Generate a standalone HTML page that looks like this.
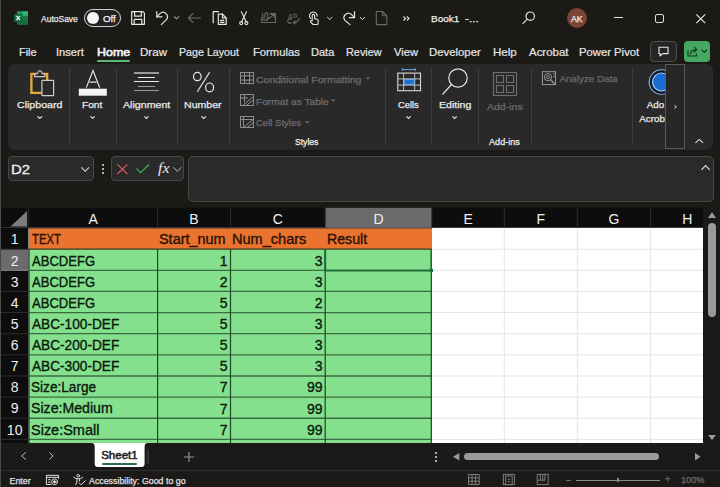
<!DOCTYPE html>
<html><head><meta charset="utf-8">
<style>
*{margin:0;padding:0;box-sizing:border-box}
html,body{width:720px;height:487px;overflow:hidden;background:#1b1a17;font-family:"Liberation Sans",sans-serif;color:#e8e8e8}
.a{position:absolute}
.t{position:absolute;white-space:nowrap;line-height:1}
.g{-webkit-text-stroke:0.35px currentColor}
svg{position:absolute;overflow:visible}
</style></head><body>
<div class="a" style="left:0.00px;top:0.00px;width:1.20px;height:487.00px;background:#4a4a4a;z-index:50"></div>
<svg style="left:0;top:0" width="40" height="40" viewBox="0 0 40 40"><rect x="17" y="11.3" width="11" height="13.3" rx="1" fill="#1d9a58"/><rect x="17" y="15.8" width="11" height="4.4" fill="#127a44"/><rect x="17" y="20.2" width="11" height="4.4" rx="1" fill="#176a3c"/><rect x="22.5" y="11.3" width="5.5" height="4.5" fill="#2fb273"/><rect x="14.1" y="13.9" width="8.2" height="8.2" rx="0.8" fill="#0f6b3a"/><path d="M16.4 15.8 L20 20.2 M20 15.8 L16.4 20.2" stroke="#f4f4f4" stroke-width="1.2"/></svg>
<div class="a" style="left:83.50px;top:9.40px;width:37.10px;height:17.25px;border:1.4px solid #d0d0d0;border-radius:9px;background:#232323"></div>
<div class="a" style="left:86.50px;top:11.80px;width:12.70px;height:12.70px;border-radius:50%;background:#f4f4f4"></div>
<svg style="left:0;top:0" width="720" height="40" viewBox="0 0 720 40" fill="none" stroke-linecap="round" stroke-linejoin="round">
<g stroke="#e6e6e6" stroke-width="1.2">
  <path d="M131.7 11.6 H142.8 L144.4 13.2 V24.3 H131.7 Z"/>
  <path d="M134.6 11.6 V16.2 H141.3 V11.6"/>
  <path d="M134.2 24.3 V19.4 H141.8 V24.3"/>
  <path d="M156.8 11.6 V16.8 H162"/>
  <path d="M156.8 16.8 L160 13.6 A4.4 4.4 0 0 1 166.4 19.6 L161.3 24.6"/>
  <path d="M213.2 22.7 V11.7 H218.4"/>
  <path d="M218.3 24.4 V14.2 H222.5 L226.2 17.9 V24.4 Z"/>
  <path d="M222.5 14.2 V17.9 H226.2"/>
  <path d="M220.3 20.3 H223.9 M220.3 22.3 H223.9"/>
  <path d="M241.3 11.7 L246.2 21.8 M246.5 11.7 L241.6 21.8" stroke-width="1.1"/>
  <circle cx="241.2" cy="23.1" r="1.5" stroke-width="1.1"/><circle cx="246.4" cy="23.1" r="1.5" stroke-width="1.1"/>
  <path d="M312.2 20.6 V15.6 A1.2 1.2 0 0 1 314.6 15.6 V18.6 L317 19.2 A1.3 1.3 0 0 1 318.2 20.5 V23.2 A1.3 1.3 0 0 1 316.9 24.5 H313.2 L310.7 22.1 A0.9 0.9 0 0 1 311.3 20.6 L312.2 20.9" stroke-width="1.1"/>
  <path d="M310.5 18.4 A3.8 3.8 0 1 1 317.1 16.3" stroke-width="1.1"/>
  <path d="M354.5 11.6 V17.6 H349.3"/>
  <path d="M354.5 17.6 L351.4 14.4 A4.4 4.4 0 0 0 345 20.4 L350 24.6"/>
</g>
<g stroke="#dcdcdc" stroke-width="1">
  <path d="M174.3 16.7 L176.5 18.9 L178.7 16.7"/>
  <path d="M327.4 17.3 L329.7 19.5 L332 17.3"/>
  <path d="M360.2 17.3 L362.5 19.5 L364.8 17.3"/>
</g>
<g stroke="#6a6a6a" stroke-width="1.1">
  <path d="M200.5 18 H188.5 M193 13.5 L188.5 18 L193 22.5"/>
  <path d="M261.7 17.5 V22.5 H275.5 V13.6 H270"/>
  <path d="M266 20.5 L274 14.5 M270.8 14.2 H274.2 V17.5"/>
  <path d="M264.9 18 V14.3 A1.4 1.4 0 0 1 267.7 14.3 V17.8 A2.5 2.5 0 0 1 262.7 17.8 V13.5"/>
  <path d="M376.3 11.5 H382.6 L386.8 15.7 V24.6 H376.3 Z M382.6 11.5 V15.7 H386.8"/>
  <path d="M291.5 19.2 A2.3 2.3 0 1 0 291.5 22.8"/>
  <path d="M299.5 18.5 L296.5 22.5 H293.5 M295.2 21 L293.5 22.5 L295.2 24"/>
</g>
</svg>
<div class="t" style="left:288.2px;top:11.6px;font-size:7.5px;color:#6a6a6a;letter-spacing:0.8px">ab</div>
<svg style="left:402.5px;top:16px" width="7" height="5" viewBox="0 0 7 5" fill="none" stroke="#e6e6e6" stroke-width="1.1"><path d="M0.5 0.5 L2.5 2.5 L0.5 4.5 M4 0.5 L6 2.5 L4 4.5"/></svg>
<svg style="left:522px;top:11px" width="14" height="14" viewBox="0 0 14 14" fill="none" stroke="#e0e0e0" stroke-width="1.2"><circle cx="8.2" cy="5.2" r="4.2"/><path d="M5.2 8.2 L0.6 12.8"/></svg>
<div class="a" style="left:566.80px;top:7.80px;width:20.20px;height:20.20px;border-radius:50%;background:#7b4436"></div>
<div class="a" style="left:613.50px;top:17.00px;width:9.50px;height:1.20px;background:#e0e0e0"></div>
<div class="a" style="left:654.50px;top:13.80px;width:9.30px;height:9.30px;border:1.3px solid #e0e0e0;border-radius:2px"></div>
<svg style="left:695.5px;top:13.8px" width="9.5" height="9.5" viewBox="0 0 10 10" fill="none" stroke="#e8e8e8" stroke-width="1.2"><path d="M0.3 0.3 L9.7 9.7 M9.7 0.3 L0.3 9.7"/></svg>
<div class="a" style="left:97.00px;top:60.00px;width:33.00px;height:2.00px;background:#5cb878;border-radius:1px"></div>
<div class="a" style="left:650.30px;top:41.00px;width:26.60px;height:21.00px;border:1px solid #4e4e4e;border-radius:4px;background:#252525"></div>
<svg style="left:0;top:0" width="720" height="70" viewBox="0 0 720 70" fill="none" stroke-linejoin="round" stroke-linecap="round"><path d="M659 47.2 H668 V53.6 H662.6 L660 56 V53.6 H659 Z" stroke="#e8e8e8" stroke-width="1.1"/></svg>
<div class="a" style="left:683.90px;top:41.00px;width:26.30px;height:20.50px;border-radius:4px;background:#45a860"></div>
<svg style="left:0;top:0" width="720" height="70" viewBox="0 0 720 70" fill="none" stroke="#123a1c" stroke-width="1.1" stroke-linejoin="round" stroke-linecap="round"><path d="M688 50.5 V56 H696.4 V53.8"/><path d="M690.5 54 C690.8 50.8 692.6 49.6 696.4 49.6 M694.3 47.2 L696.8 49.6 L694.3 52"/><path d="M702 50 L704.3 52.3 L706.6 50"/></svg>
<div class="a" style="left:8.00px;top:64.30px;width:705.30px;height:85.70px;border-radius:7px;background:#292929"></div>
<div class="a" style="left:69.00px;top:68.00px;width:1.00px;height:76.00px;background:#3e3e3e"></div>
<div class="a" style="left:116.20px;top:68.00px;width:1.00px;height:76.00px;background:#3e3e3e"></div>
<div class="a" style="left:177.00px;top:68.00px;width:1.00px;height:76.00px;background:#3e3e3e"></div>
<div class="a" style="left:229.20px;top:68.00px;width:1.00px;height:76.00px;background:#3e3e3e"></div>
<div class="a" style="left:385.00px;top:68.00px;width:1.00px;height:76.00px;background:#3e3e3e"></div>
<div class="a" style="left:431.00px;top:68.00px;width:1.00px;height:76.00px;background:#3e3e3e"></div>
<div class="a" style="left:478.20px;top:68.00px;width:1.00px;height:76.00px;background:#3e3e3e"></div>
<div class="a" style="left:531.20px;top:68.00px;width:1.00px;height:76.00px;background:#3e3e3e"></div>
<div class="a" style="left:631.50px;top:68.00px;width:1.00px;height:76.00px;background:#3e3e3e"></div>
<svg style="left:0;top:0" width="720" height="150" viewBox="0 0 720 150" fill="none"><path d="M41.4 92.8 H31.4 V73.8 H47.2 V80" stroke="#e9a83c" stroke-width="2.3"/><path d="M34.6 76.6 H45 V74.6 Q43.4 73.9 42.1 73.4 Q41.2 70.6 39.8 70.6 Q38.4 70.6 37.5 73.4 Q36.2 73.9 34.6 74.6 Z" stroke="#cdcdcd" stroke-width="1.1" fill="#292929"/><rect x="41.9" y="80.4" width="11.7" height="15.2" rx="0.6" stroke="#cdcdcd" stroke-width="1.2" fill="#292929"/></svg>
<svg style="left:36.90px;top:116.00px" width="5.60" height="2.60" viewBox="0 0 5.60 2.60" fill="none" stroke="#e0e0e0" stroke-width="1.2"><path d="M0.4 0.4 L2.80 2.20 L5.20 0.4"/></svg>
<svg style="left:0;top:0" width="720" height="150" viewBox="0 0 720 150" fill="none"><path d="M86.3 87.6 L93 70.6 L99.7 87.6 M89.6 82.1 H96.4" stroke="#e8e8e8" stroke-width="1.2"/><rect x="78.8" y="88.7" width="28" height="7" fill="#f4f4f4"/></svg>
<svg style="left:90.10px;top:116.00px" width="5.20" height="2.60" viewBox="0 0 5.20 2.60" fill="none" stroke="#e0e0e0" stroke-width="1.2"><path d="M0.4 0.4 L2.60 2.20 L4.80 0.4"/></svg>
<div class="a" style="left:134.30px;top:72.30px;width:24.30px;height:1.30px;background:#9a9a9a"></div>
<div class="a" style="left:138.00px;top:77.00px;width:17.20px;height:1.30px;background:#e8e8e8"></div>
<div class="a" style="left:134.30px;top:81.00px;width:24.30px;height:1.30px;background:#e8e8e8"></div>
<div class="a" style="left:138.00px;top:85.50px;width:17.20px;height:1.30px;background:#9a9a9a"></div>
<div class="a" style="left:134.30px;top:89.60px;width:24.30px;height:1.30px;background:#9a9a9a"></div>
<svg style="left:143.70px;top:116.00px" width="4.90" height="2.90" viewBox="0 0 4.90 2.90" fill="none" stroke="#e0e0e0" stroke-width="1.2"><path d="M0.4 0.4 L2.45 2.50 L4.50 0.4"/></svg>
<svg style="left:0;top:0" width="720" height="100" viewBox="0 0 720 100" fill="none" stroke="#e8e8e8" stroke-width="1.2"><ellipse cx="197.35" cy="76.55" rx="3.85" ry="4.15"/><ellipse cx="209.6" cy="87.4" rx="4" ry="4.4"/><path d="M209.6 72.3 L197.3 91.7"/></svg>
<svg style="left:200.50px;top:116.00px" width="5.40" height="2.90" viewBox="0 0 5.40 2.90" fill="none" stroke="#e0e0e0" stroke-width="1.2"><path d="M0.4 0.4 L2.70 2.50 L5.00 0.4"/></svg>
<svg style="left:240px;top:72px" width="14" height="12" viewBox="0 0 14 12" fill="none" stroke="#8c8c8c" stroke-width="1"><rect x="0.5" y="0.5" width="13" height="11"/><path d="M0.5 4 H13.5 M0.5 8 H13.5 M4.5 0.5 V11.5 M9.5 0.5 V11.5"/><rect x="4.5" y="4" width="5" height="4" fill="#151515"/></svg>
<svg style="left:365.70px;top:76.80px" width="3.90" height="2.10" viewBox="0 0 3.90 2.10" fill="none" stroke="#6e6e6e" stroke-width="1.2"><path d="M0.4 0.4 L1.95 1.70 L3.50 0.4"/></svg>
<svg style="left:240px;top:94px" width="14" height="12" viewBox="0 0 14 12" fill="none" stroke="#8c8c8c" stroke-width="1"><rect x="0.5" y="0.5" width="13" height="11"/><path d="M0.5 4 H8 M4.5 0.5 V8"/><path d="M3 11 L13 3 M6 11.5 L13.5 6"/></svg>
<svg style="left:331.30px;top:99.00px" width="4.50" height="2.10" viewBox="0 0 4.50 2.10" fill="none" stroke="#6e6e6e" stroke-width="1.2"><path d="M0.4 0.4 L2.25 1.70 L4.10 0.4"/></svg>
<svg style="left:240px;top:116px" width="14" height="12" viewBox="0 0 14 12" fill="none" stroke="#8c8c8c" stroke-width="1"><rect x="0.5" y="0.5" width="13" height="11"/><path d="M0.5 3.5 H13.5 M3.5 0.5 V11.5"/><path d="M4 11 L13 3.5 M7 11.5 L13.5 6.5"/></svg>
<svg style="left:305.40px;top:121.00px" width="4.50" height="2.10" viewBox="0 0 4.50 2.10" fill="none" stroke="#6e6e6e" stroke-width="1.2"><path d="M0.4 0.4 L2.25 1.70 L4.10 0.4"/></svg>
<svg style="left:0;top:0" width="720" height="150" viewBox="0 0 720 150" fill="none"><path d="M402.3 69.6 H415.3 M402.3 68.2 V71 M415.3 68.2 V71" stroke="#6fa8e0" stroke-width="1"/><rect x="397.8" y="73.1" width="22.7" height="17.6" stroke="#dadada" stroke-width="1.1"/><path d="M403.6 73.1 V90.7 M414.7 73.1 V90.7 M397.8 78.9 H420.5 M397.8 85.1 H420.5" stroke="#bdbdbd" stroke-width="1"/><rect x="404.1" y="79.4" width="10.1" height="5.2" fill="#1f6fd0" stroke="#7ab4f0" stroke-width="0.9"/></svg>
<svg style="left:406.00px;top:115.80px" width="5.00" height="2.80" viewBox="0 0 5.00 2.80" fill="none" stroke="#e0e0e0" stroke-width="1.2"><path d="M0.4 0.4 L2.50 2.40 L4.60 0.4"/></svg>
<svg style="left:442px;top:68px" width="27" height="27" viewBox="0 0 27 27" fill="none" stroke="#e0e0e0" stroke-width="1.2"><circle cx="16" cy="10" r="9.2"/><path d="M9.5 16.5 L0.5 26.5"/></svg>
<svg style="left:451.90px;top:115.80px" width="5.20" height="2.80" viewBox="0 0 5.20 2.80" fill="none" stroke="#e0e0e0" stroke-width="1.2"><path d="M0.4 0.4 L2.60 2.40 L4.80 0.4"/></svg>
<svg style="left:493px;top:71.5px" width="24" height="24" viewBox="0 0 24 24" fill="none" stroke="#6f6f6f" stroke-width="1.1"><rect x="0.5" y="0.5" width="23" height="23"/><rect x="3.5" y="3.5" width="7" height="7"/><rect x="13.5" y="3.5" width="7" height="7"/><rect x="3.5" y="13.5" width="7" height="7"/><rect x="13.5" y="13.5" width="7" height="7"/></svg>
<svg style="left:0;top:0" width="720" height="150" viewBox="0 0 720 150" fill="none" stroke="#9a9a9a" stroke-width="1"><rect x="542.4" y="71.7" width="13.2" height="12.9"/><circle cx="548" cy="77.2" r="3.6"/><circle cx="548" cy="77.2" r="1.5" stroke-width="0.9"/><path d="M550.6 79.8 L554.6 83.8" stroke-width="1.3"/><path d="M553 74 H555 M553 76.5 H555" stroke-width="0.8"/></svg>
<svg style="left:0;top:0" width="720" height="150" viewBox="0 0 720 150" fill="none"><circle cx="661.5" cy="82" r="12.2" stroke="#86acd6" stroke-width="1.3"/><circle cx="661.5" cy="82" r="10.7" stroke="#06152a" stroke-width="1.8"/><circle cx="661.5" cy="82" r="9.0" fill="#1b6dd1" stroke="#a2c6ee" stroke-width="1.2"/></svg>
<div class="a" style="left:665.20px;top:64.00px;width:20.30px;height:84.60px;border:1px solid #5a5a5a;background:#272727"></div>
<svg style="left:674.3px;top:104.8px" width="2.8" height="3.6" viewBox="0 0 2.8 3.6" fill="none" stroke="#e0e0e0" stroke-width="0.9"><path d="M0.3 0.3 L2.5 1.8 L0.3 3.3"/></svg>
<svg style="left:695px;top:138.8px" width="8.6" height="4.2" viewBox="0 0 8.6 4.2" fill="none" stroke="#e0e0e0" stroke-width="1.1"><path d="M0.4 3.8 L4.3 0.4 L8.2 3.8"/></svg>
<div class="a" style="left:7.50px;top:156.30px;width:86.20px;height:24.70px;border:1px solid #474747;border-radius:4px;background:#2a2a2a"></div>
<svg style="left:80.8px;top:167px" width="8.4" height="4.7" viewBox="0 0 8.4 4.7" fill="none" stroke="#d8d8d8" stroke-width="1.1"><path d="M0.4 0.4 L4.2 4.3 L8 0.4"/></svg>
<div class="a" style="left:101.50px;top:164.40px;width:2.10px;height:2.10px;background:#e6e6e6;border-radius:1px"></div>
<div class="a" style="left:101.50px;top:168.00px;width:2.10px;height:2.10px;background:#e6e6e6;border-radius:1px"></div>
<div class="a" style="left:101.50px;top:171.60px;width:2.10px;height:2.10px;background:#e6e6e6;border-radius:1px"></div>
<div class="a" style="left:111.30px;top:156.30px;width:72.40px;height:24.50px;border:1px solid #474747;border-radius:4px;background:#2a2a2a"></div>
<svg style="left:116.7px;top:163.8px" width="10.8" height="10.4" viewBox="0 0 10.8 10.4" fill="none" stroke="#e0575c" stroke-width="1.2"><path d="M0.4 0.4 L10.4 10 M10.4 0.4 L0.4 10"/></svg>
<svg style="left:135.8px;top:163.8px" width="13.4" height="9.2" viewBox="0 0 13.4 9.2" fill="none" stroke="#3fae5c" stroke-width="1.3"><path d="M0.5 4.6 L4.6 8.7 L13 0.5"/></svg>
<svg style="left:173.3px;top:166.5px" width="8.7" height="4.8" viewBox="0 0 8.7 4.8" fill="none" stroke="#bdbdbd" stroke-width="1"><path d="M0.4 0.4 L4.35 4.4 L8.3 0.4"/></svg>
<div class="a" style="left:187.50px;top:156.30px;width:526.30px;height:45.90px;border:1px solid #474747;border-radius:5px;background:#2a2a2a"></div>
<svg style="left:700.8px;top:164.7px" width="9.2" height="5.3" viewBox="0 0 9.2 5.3" fill="none" stroke="#e0e0e0" stroke-width="1.1"><path d="M0.4 4.9 L4.6 0.5 L8.8 4.9"/></svg>
<div class="a" style="left:1.00px;top:208.00px;width:702.00px;height:235.00px;background:#ffffff"></div>
<div class="a" style="left:28.50px;top:228.20px;width:403.30px;height:21.00px;background:#e9732f"></div>
<div class="a" style="left:28.50px;top:249.20px;width:403.30px;height:193.80px;background:#84e08c"></div>
<svg style="left:0;top:0" width="720" height="487" viewBox="0 0 720 487" shape-rendering="geometricPrecision">
<line x1="431.8" y1="249.20" x2="703" y2="249.20" stroke="#e4e4e4" stroke-width="1"/>
<line x1="431.8" y1="270.33" x2="703" y2="270.33" stroke="#e4e4e4" stroke-width="1"/>
<line x1="431.8" y1="291.46" x2="703" y2="291.46" stroke="#e4e4e4" stroke-width="1"/>
<line x1="431.8" y1="312.59" x2="703" y2="312.59" stroke="#e4e4e4" stroke-width="1"/>
<line x1="431.8" y1="333.72" x2="703" y2="333.72" stroke="#e4e4e4" stroke-width="1"/>
<line x1="431.8" y1="354.85" x2="703" y2="354.85" stroke="#e4e4e4" stroke-width="1"/>
<line x1="431.8" y1="375.98" x2="703" y2="375.98" stroke="#e4e4e4" stroke-width="1"/>
<line x1="431.8" y1="397.11" x2="703" y2="397.11" stroke="#e4e4e4" stroke-width="1"/>
<line x1="431.8" y1="418.24" x2="703" y2="418.24" stroke="#e4e4e4" stroke-width="1"/>
<line x1="431.8" y1="439.37" x2="703" y2="439.37" stroke="#e4e4e4" stroke-width="1"/>
<line x1="504.30" y1="228" x2="504.30" y2="443" stroke="#e4e4e4" stroke-width="1"/>
<line x1="577.30" y1="228" x2="577.30" y2="443" stroke="#e4e4e4" stroke-width="1"/>
<line x1="650.70" y1="228" x2="650.70" y2="443" stroke="#e4e4e4" stroke-width="1"/>
<line x1="28.5" y1="270.33" x2="431.8" y2="270.33" stroke="#3b6b42" stroke-width="1.3"/>
<line x1="28.5" y1="291.46" x2="431.8" y2="291.46" stroke="#3b6b42" stroke-width="1.3"/>
<line x1="28.5" y1="312.59" x2="431.8" y2="312.59" stroke="#3b6b42" stroke-width="1.3"/>
<line x1="28.5" y1="333.72" x2="431.8" y2="333.72" stroke="#3b6b42" stroke-width="1.3"/>
<line x1="28.5" y1="354.85" x2="431.8" y2="354.85" stroke="#3b6b42" stroke-width="1.3"/>
<line x1="28.5" y1="375.98" x2="431.8" y2="375.98" stroke="#3b6b42" stroke-width="1.3"/>
<line x1="28.5" y1="397.11" x2="431.8" y2="397.11" stroke="#3b6b42" stroke-width="1.3"/>
<line x1="28.5" y1="418.24" x2="431.8" y2="418.24" stroke="#3b6b42" stroke-width="1.3"/>
<line x1="28.5" y1="439.37" x2="431.8" y2="439.37" stroke="#3b6b42" stroke-width="1.3"/>
<line x1="28.5" y1="249.20" x2="431.8" y2="249.20" stroke="#3a3a22" stroke-width="1.3"/>
<line x1="28.5" y1="228.3" x2="431.8" y2="228.3" stroke="#7a4a26" stroke-width="0.9"/>
<line x1="29.00" y1="249.20" x2="29.00" y2="443" stroke="#1d4a24" stroke-width="1.2"/>
<line x1="157.60" y1="249.20" x2="157.60" y2="443" stroke="#1d4a24" stroke-width="1.2"/>
<line x1="230.50" y1="249.20" x2="230.50" y2="443" stroke="#1d4a24" stroke-width="1.2"/>
<line x1="325.20" y1="249.20" x2="325.20" y2="443" stroke="#1d4a24" stroke-width="1.2"/>
<line x1="431.30" y1="249.20" x2="431.30" y2="443" stroke="#1d4a24" stroke-width="1.2"/>
<line x1="325.2" y1="249.20" x2="325.2" y2="271.13" stroke="#1e6a38" stroke-width="2"/>
<line x1="325.2" y1="270.63" x2="431.8" y2="270.63" stroke="#1e6a38" stroke-width="1.8"/>
<line x1="431.3" y1="249.20" x2="431.3" y2="270.33" stroke="#1e6a38" stroke-width="1.4"/>
<rect x="429.8" y="268.83" width="3.2" height="3.2" fill="#1e6a38"/>
<rect x="1" y="207.8" width="702" height="20" fill="#0d0d0d"/>
<rect x="325.2" y="207.8" width="106.6" height="20" fill="#6b6b6b"/>
<line x1="157.60" y1="208" x2="157.60" y2="227.8" stroke="#2e2e2e" stroke-width="1"/>
<line x1="230.50" y1="208" x2="230.50" y2="227.8" stroke="#2e2e2e" stroke-width="1"/>
<line x1="325.20" y1="208" x2="325.20" y2="227.8" stroke="#2e2e2e" stroke-width="1"/>
<line x1="431.80" y1="208" x2="431.80" y2="227.8" stroke="#2e2e2e" stroke-width="1"/>
<line x1="504.30" y1="208" x2="504.30" y2="227.8" stroke="#2e2e2e" stroke-width="1"/>
<line x1="577.30" y1="208" x2="577.30" y2="227.8" stroke="#2e2e2e" stroke-width="1"/>
<line x1="650.70" y1="208" x2="650.70" y2="227.8" stroke="#2e2e2e" stroke-width="1"/>
<rect x="1" y="227.8" width="27.5" height="215.2" fill="#0d0d0d"/>
<rect x="1" y="249.20" width="27.5" height="21.13" fill="#6b6b6b"/>
<line x1="1" y1="249.20" x2="28.3" y2="249.20" stroke="#2e2e2e" stroke-width="1"/>
<line x1="1" y1="270.33" x2="28.3" y2="270.33" stroke="#8a8a8a" stroke-width="1"/>
<line x1="1" y1="291.46" x2="28.3" y2="291.46" stroke="#2e2e2e" stroke-width="1"/>
<line x1="1" y1="312.59" x2="28.3" y2="312.59" stroke="#2e2e2e" stroke-width="1"/>
<line x1="1" y1="333.72" x2="28.3" y2="333.72" stroke="#2e2e2e" stroke-width="1"/>
<line x1="1" y1="354.85" x2="28.3" y2="354.85" stroke="#2e2e2e" stroke-width="1"/>
<line x1="1" y1="375.98" x2="28.3" y2="375.98" stroke="#2e2e2e" stroke-width="1"/>
<line x1="1" y1="397.11" x2="28.3" y2="397.11" stroke="#2e2e2e" stroke-width="1"/>
<line x1="1" y1="418.24" x2="28.3" y2="418.24" stroke="#2e2e2e" stroke-width="1"/>
<line x1="1" y1="439.37" x2="28.3" y2="439.37" stroke="#2e2e2e" stroke-width="1"/>
<line x1="28.3" y1="208" x2="28.3" y2="227.8" stroke="#2e2e2e" stroke-width="1"/>
<path d="M27 211 V226.5 H10.5 Z" fill="#7c7c7c"/>
</svg>
<div class="t" style="left:28.50px;top:211.95px;width:129.10px;text-align:center;font-size:14px;color:#f0f0f0">A</div>
<div class="t" style="left:157.60px;top:211.95px;width:72.90px;text-align:center;font-size:14px;color:#f0f0f0">B</div>
<div class="t" style="left:230.50px;top:211.95px;width:94.70px;text-align:center;font-size:14px;color:#f0f0f0">C</div>
<div class="t" style="left:325.20px;top:211.95px;width:106.60px;text-align:center;font-size:14px;color:#f0f0f0">D</div>
<div class="t" style="left:431.80px;top:211.95px;width:72.50px;text-align:center;font-size:14px;color:#f0f0f0">E</div>
<div class="t" style="left:504.30px;top:211.95px;width:73.00px;text-align:center;font-size:14px;color:#f0f0f0">F</div>
<div class="t" style="left:577.30px;top:211.95px;width:73.40px;text-align:center;font-size:14px;color:#f0f0f0">G</div>
<div class="t" style="left:650.70px;top:211.95px;width:73.00px;text-align:center;font-size:14px;color:#f0f0f0">H</div>
<div class="t" style="left:1px;top:232.45px;width:27.3px;text-align:center;font-size:14px;color:#f0f0f0">1</div>
<div class="t" style="left:1px;top:253.58px;width:27.3px;text-align:center;font-size:14px;color:#f0f0f0">2</div>
<div class="t" style="left:1px;top:274.71px;width:27.3px;text-align:center;font-size:14px;color:#f0f0f0">3</div>
<div class="t" style="left:1px;top:295.84px;width:27.3px;text-align:center;font-size:14px;color:#f0f0f0">4</div>
<div class="t" style="left:1px;top:316.97px;width:27.3px;text-align:center;font-size:14px;color:#f0f0f0">5</div>
<div class="t" style="left:1px;top:338.10px;width:27.3px;text-align:center;font-size:14px;color:#f0f0f0">6</div>
<div class="t" style="left:1px;top:359.23px;width:27.3px;text-align:center;font-size:14px;color:#f0f0f0">7</div>
<div class="t" style="left:1px;top:380.36px;width:27.3px;text-align:center;font-size:14px;color:#f0f0f0">8</div>
<div class="t" style="left:1px;top:401.49px;width:27.3px;text-align:center;font-size:14px;color:#f0f0f0">9</div>
<div class="t" style="left:1px;top:422.62px;width:27.3px;text-align:center;font-size:14px;color:#f0f0f0">10</div>
<div class="t" style="left:157.5px;top:253.68px;width:70px;text-align:right;font-size:14px;color:#0b1a0d;-webkit-text-stroke:0.35px #0b1a0d">1</div>
<div class="t" style="left:230.5px;top:253.68px;width:92px;text-align:right;font-size:14px;color:#0b1a0d;-webkit-text-stroke:0.35px #0b1a0d">3</div>
<div class="t" style="left:157.5px;top:274.81px;width:70px;text-align:right;font-size:14px;color:#0b1a0d;-webkit-text-stroke:0.35px #0b1a0d">2</div>
<div class="t" style="left:230.5px;top:274.81px;width:92px;text-align:right;font-size:14px;color:#0b1a0d;-webkit-text-stroke:0.35px #0b1a0d">3</div>
<div class="t" style="left:157.5px;top:295.94px;width:70px;text-align:right;font-size:14px;color:#0b1a0d;-webkit-text-stroke:0.35px #0b1a0d">5</div>
<div class="t" style="left:230.5px;top:295.94px;width:92px;text-align:right;font-size:14px;color:#0b1a0d;-webkit-text-stroke:0.35px #0b1a0d">2</div>
<div class="t" style="left:157.5px;top:317.07px;width:70px;text-align:right;font-size:14px;color:#0b1a0d;-webkit-text-stroke:0.35px #0b1a0d">5</div>
<div class="t" style="left:230.5px;top:317.07px;width:92px;text-align:right;font-size:14px;color:#0b1a0d;-webkit-text-stroke:0.35px #0b1a0d">3</div>
<div class="t" style="left:157.5px;top:338.20px;width:70px;text-align:right;font-size:14px;color:#0b1a0d;-webkit-text-stroke:0.35px #0b1a0d">5</div>
<div class="t" style="left:230.5px;top:338.20px;width:92px;text-align:right;font-size:14px;color:#0b1a0d;-webkit-text-stroke:0.35px #0b1a0d">3</div>
<div class="t" style="left:157.5px;top:359.33px;width:70px;text-align:right;font-size:14px;color:#0b1a0d;-webkit-text-stroke:0.35px #0b1a0d">5</div>
<div class="t" style="left:230.5px;top:359.33px;width:92px;text-align:right;font-size:14px;color:#0b1a0d;-webkit-text-stroke:0.35px #0b1a0d">3</div>
<div class="t" style="left:157.5px;top:380.46px;width:70px;text-align:right;font-size:14px;color:#0b1a0d;-webkit-text-stroke:0.35px #0b1a0d">7</div>
<div class="t" style="left:230.5px;top:380.46px;width:92px;text-align:right;font-size:14px;color:#0b1a0d;-webkit-text-stroke:0.35px #0b1a0d">99</div>
<div class="t" style="left:157.5px;top:401.59px;width:70px;text-align:right;font-size:14px;color:#0b1a0d;-webkit-text-stroke:0.35px #0b1a0d">7</div>
<div class="t" style="left:230.5px;top:401.59px;width:92px;text-align:right;font-size:14px;color:#0b1a0d;-webkit-text-stroke:0.35px #0b1a0d">99</div>
<div class="t" style="left:157.5px;top:422.72px;width:70px;text-align:right;font-size:14px;color:#0b1a0d;-webkit-text-stroke:0.35px #0b1a0d">7</div>
<div class="t" style="left:230.5px;top:422.72px;width:92px;text-align:right;font-size:14px;color:#0b1a0d;-webkit-text-stroke:0.35px #0b1a0d">99</div>
<div class="a" style="left:703px;top:208px;width:17px;height:235px;background:#1a1a1a"></div>
<svg style="left:708px;top:212px" width="8" height="6" viewBox="0 0 8 6"><path d="M0 6 L4 0 L8 6 Z" fill="#9a9a9a"/></svg>
<div class="a" style="left:708px;top:222.7px;width:7.5px;height:94.6px;border-radius:4px;background:#9a9a9a"></div>
<svg style="left:708px;top:434.7px" width="8" height="5" viewBox="0 0 8 5"><path d="M0 0 L4 5 L8 0 Z" fill="#9a9a9a"/></svg>
<div class="a" style="left:1.00px;top:443.00px;width:719.00px;height:26.80px;background:#1b1a18"></div>
<svg style="left:20.6px;top:452px" width="5.2" height="7.9" viewBox="0 0 5.2 7.9" fill="none" stroke="#bdbdbd" stroke-width="1"><path d="M4.8 0.4 L0.6 3.95 L4.8 7.5"/></svg>
<svg style="left:48.9px;top:452px" width="4.4" height="7.9" viewBox="0 0 4.4 7.9" fill="none" stroke="#bdbdbd" stroke-width="1"><path d="M0.4 0.4 L4 3.95 L0.4 7.5"/></svg>
<svg style="left:0;top:0" width="720" height="487" viewBox="0 0 720 487"><path d="M91.2 443 H148 Q144.6 443 144.6 446.4 V463.8 Q144.6 467 141.4 467 H97.9 Q94.7 467 94.7 463.8 V446.4 Q94.7 443 91.2 443 Z" fill="#ffffff"/></svg>
<div class="a" style="left:101.90px;top:463.00px;width:35.50px;height:2.00px;background:#2b6e50;border-radius:1px"></div>
<div class="a" style="left:146.50px;top:449.20px;width:2.00px;height:14.80px;background:#333333"></div>
<svg style="left:184px;top:451.5px" width="9.9" height="9.9" viewBox="0 0 9.9 9.9" fill="none" stroke="#9a9a9a" stroke-width="1.1"><path d="M4.95 0 V9.9 M0 4.95 H9.9"/></svg>
<div class="a" style="left:434.60px;top:452.40px;width:2.10px;height:2.10px;border-radius:1px;background:#dcdcdc"></div>
<div class="a" style="left:434.60px;top:456.00px;width:2.10px;height:2.10px;border-radius:1px;background:#dcdcdc"></div>
<div class="a" style="left:434.60px;top:459.60px;width:2.10px;height:2.10px;border-radius:1px;background:#dcdcdc"></div>
<svg style="left:453.3px;top:452.5px" width="6.3" height="7.5" viewBox="0 0 6.3 7.5"><path d="M6.3 0 V7.5 L0 3.75 Z" fill="#9a9a9a"/></svg>
<div class="a" style="left:463.75px;top:453.00px;width:195.50px;height:7.20px;border-radius:4px;background:#9a9a9a"></div>
<svg style="left:694.6px;top:452.5px" width="5.6" height="7.5" viewBox="0 0 5.6 7.5"><path d="M0 0 V7.5 L5.6 3.75 Z" fill="#9a9a9a"/></svg>
<div class="a" style="left:1.00px;top:469.50px;width:719.00px;height:1.00px;background:#2e2e2e"></div>
<div class="a" style="left:1.00px;top:470.50px;width:719.00px;height:16.50px;background:#1b1a18"></div>
<svg style="left:0;top:0" width="720" height="487" viewBox="0 0 720 487" fill="none" stroke="#dedede" stroke-width="1" stroke-linecap="round" stroke-linejoin="round"><path d="M51 484.5 H46.4 V475.3 H58.6 V478.6 M46.4 477.3 H58.6 M48.3 479.7 H50.3 M48.3 482.1 H50.3"/><circle cx="54.6" cy="481.8" r="2.9"/><circle cx="54.6" cy="481.8" r="1.1" fill="#dedede"/><circle cx="78.3" cy="475.8" r="1.3"/><path d="M73.8 477.3 Q76 479.2 78.3 478.7 Q80.6 479.2 82.8 477.3 M77 479 Q77.6 482.2 75.8 484.8 M79.6 479 V481.2 M79.2 483 L81 484.8 L85.3 480.8"/></svg>
<svg style="left:468.3px;top:473.9px" width="11.7" height="11.1" viewBox="0 0 11.7 11.1" fill="none" stroke="#7d7d7d" stroke-width="1"><path d="M0.5 0.5 H11.2 V10.6 H0.5 Z M0.5 3.87 H11.2 M0.5 7.23 H11.2 M4.07 0.5 V10.6 M7.63 0.5 V10.6"/></svg>
<svg style="left:0;top:0" width="720" height="487" viewBox="0 0 720 487" fill="none" stroke="#7d7d7d" stroke-width="1"><rect x="503.4" y="474.4" width="11" height="10.2"/><rect x="505.6" y="476" width="6.6" height="8.6"/><path d="M507.6 479.2 H510.2 M507.6 481.6 H510.2"/><rect x="537.2" y="474.4" width="11" height="10.2"/><path d="M540.3 474.4 V480.2 M542.7 474.4 V480.2 M537.2 480.2 H544.9 V474.4"/></svg>
<div class="a" style="left:565.80px;top:480.00px;width:5.00px;height:1.00px;background:#6a6a6a"></div>
<div class="a" style="left:575.80px;top:479.60px;width:84.20px;height:1.30px;background:#8a8a8a"></div>
<div class="a" style="left:617.10px;top:477.70px;width:1.60px;height:4.60px;background:#8a8a8a"></div>
<svg style="left:665.4px;top:475.5px" width="5.6" height="5.6" viewBox="0 0 5.6 5.6" fill="none" stroke="#6a6a6a" stroke-width="1"><path d="M2.8 0 V5.6 M0 2.8 H5.6"/></svg>
<div class="t" style="left:41.30px;top:14.90px;font-size:9px;font-weight:normal;font-family:'Liberation Sans';font-style:normal;color:#e6e6e6;transform:scaleX(0.9436);transform-origin:0 0;-webkit-text-stroke:0.25px currentColor;">AutoSave</div>
<div class="t" style="left:102.70px;top:13.90px;font-size:9.5px;font-weight:normal;font-family:'Liberation Sans';font-style:normal;color:#f0f0f0;transform:scaleX(1.0250);transform-origin:0 0;-webkit-text-stroke:0.25px currentColor;">Off</div>
<div class="t" style="left:430.67px;top:14.10px;font-size:9.7px;font-weight:normal;font-family:'Liberation Sans';font-style:normal;color:#ececec;transform:scaleX(1.0346);transform-origin:0 0;-webkit-text-stroke:0.25px currentColor;">Book1</div>
<div class="t" style="left:464.97px;top:14.10px;font-size:9.7px;font-weight:normal;font-family:'Liberation Sans';font-style:normal;color:#ececec;transform:scaleX(1.2333);transform-origin:0 0;-webkit-text-stroke:0.25px currentColor;">-...</div>
<div class="t" style="left:570.90px;top:13.80px;font-size:9.4px;font-weight:normal;font-family:'Liberation Sans';font-style:normal;color:#f2f2f2;transform:scaleX(0.9333);transform-origin:0 0;-webkit-text-stroke:0.25px currentColor;">AK</div>
<div class="t" style="left:18.59px;top:47.20px;font-size:10.8px;font-weight:normal;font-family:'Liberation Sans';font-style:normal;color:#e6e6e6;transform:scaleX(1.0125);transform-origin:0 0;-webkit-text-stroke:0.2px currentColor;">File</div>
<div class="t" style="left:56.47px;top:47.20px;font-size:10.8px;font-weight:normal;font-family:'Liberation Sans';font-style:normal;color:#e6e6e6;transform:scaleX(1.0269);transform-origin:0 0;-webkit-text-stroke:0.2px currentColor;">Insert</div>
<div class="t" style="left:96.65px;top:47.20px;font-size:10.8px;font-weight:normal;font-family:'Liberation Sans';font-style:normal;color:#f2f2f2;transform:scaleX(1.1519);transform-origin:0 0;-webkit-text-stroke:0.6px currentColor;">Home</div>
<div class="t" style="left:139.93px;top:47.20px;font-size:10.8px;font-weight:normal;font-family:'Liberation Sans';font-style:normal;color:#e6e6e6;transform:scaleX(1.0708);transform-origin:0 0;-webkit-text-stroke:0.2px currentColor;">Draw</div>
<div class="t" style="left:179.01px;top:47.20px;font-size:10.8px;font-weight:normal;font-family:'Liberation Sans';font-style:normal;color:#e6e6e6;transform:scaleX(0.9883);transform-origin:0 0;-webkit-text-stroke:0.2px currentColor;">Page Layout</div>
<div class="t" style="left:252.71px;top:47.20px;font-size:10.8px;font-weight:normal;font-family:'Liberation Sans';font-style:normal;color:#e6e6e6;transform:scaleX(1.0398);transform-origin:0 0;-webkit-text-stroke:0.2px currentColor;">Formulas</div>
<div class="t" style="left:311.48px;top:47.20px;font-size:10.8px;font-weight:normal;font-family:'Liberation Sans';font-style:normal;color:#e6e6e6;transform:scaleX(1.0227);transform-origin:0 0;-webkit-text-stroke:0.2px currentColor;">Data</div>
<div class="t" style="left:346.49px;top:47.20px;font-size:10.8px;font-weight:normal;font-family:'Liberation Sans';font-style:normal;color:#e6e6e6;transform:scaleX(1.0074);transform-origin:0 0;-webkit-text-stroke:0.2px currentColor;">Review</div>
<div class="t" style="left:393.75px;top:47.20px;font-size:10.8px;font-weight:normal;font-family:'Liberation Sans';font-style:normal;color:#e6e6e6;transform:scaleX(1.0326);transform-origin:0 0;-webkit-text-stroke:0.2px currentColor;">View</div>
<div class="t" style="left:428.95px;top:47.20px;font-size:10.8px;font-weight:normal;font-family:'Liberation Sans';font-style:normal;color:#e6e6e6;transform:scaleX(1.0521);transform-origin:0 0;-webkit-text-stroke:0.2px currentColor;">Developer</div>
<div class="t" style="left:492.68px;top:47.20px;font-size:10.8px;font-weight:normal;font-family:'Liberation Sans';font-style:normal;color:#e6e6e6;transform:scaleX(1.0714);transform-origin:0 0;-webkit-text-stroke:0.2px currentColor;">Help</div>
<div class="t" style="left:528.75px;top:47.20px;font-size:10.8px;font-weight:normal;font-family:'Liberation Sans';font-style:normal;color:#e6e6e6;transform:scaleX(1.0608);transform-origin:0 0;-webkit-text-stroke:0.2px currentColor;">Acrobat</div>
<div class="t" style="left:579.36px;top:47.20px;font-size:10.8px;font-weight:normal;font-family:'Liberation Sans';font-style:normal;color:#e6e6e6;transform:scaleX(1.0446);transform-origin:0 0;-webkit-text-stroke:0.2px currentColor;">Power Pivot</div>
<div class="t" style="left:16.82px;top:99.90px;font-size:9.8px;font-weight:normal;font-family:'Liberation Sans';font-style:normal;color:#ececec;transform:scaleX(1.0825);transform-origin:0 0;-webkit-text-stroke:0.25px currentColor;">Clipboard</div>
<div class="t" style="left:82.16px;top:99.90px;font-size:9.8px;font-weight:normal;font-family:'Liberation Sans';font-style:normal;color:#ececec;transform:scaleX(1.0368);transform-origin:0 0;-webkit-text-stroke:0.25px currentColor;">Font</div>
<div class="t" style="left:123.30px;top:100.20px;font-size:9.8px;font-weight:normal;font-family:'Liberation Sans';font-style:normal;color:#ececec;transform:scaleX(1.0860);transform-origin:0 0;-webkit-text-stroke:0.25px currentColor;">Alignment</div>
<div class="t" style="left:184.12px;top:100.20px;font-size:9.8px;font-weight:normal;font-family:'Liberation Sans';font-style:normal;color:#ececec;transform:scaleX(1.0794);transform-origin:0 0;-webkit-text-stroke:0.25px currentColor;">Number</div>
<div class="t" style="left:256.33px;top:74.60px;font-size:9.8px;font-weight:normal;font-family:'Liberation Sans';font-style:normal;color:#6e6e6e;transform:scaleX(1.0691);transform-origin:0 0;-webkit-text-stroke:0.25px currentColor;">Conditional Formatting</div>
<div class="t" style="left:256.36px;top:96.60px;font-size:9.8px;font-weight:normal;font-family:'Liberation Sans';font-style:normal;color:#6e6e6e;transform:scaleX(1.0382);transform-origin:0 0;-webkit-text-stroke:0.25px currentColor;">Format as Table</div>
<div class="t" style="left:256.43px;top:118.40px;font-size:9.8px;font-weight:normal;font-family:'Liberation Sans';font-style:normal;color:#6e6e6e;transform:scaleX(0.9711);transform-origin:0 0;-webkit-text-stroke:0.25px currentColor;">Cell Styles</div>
<div class="t" style="left:294.90px;top:137.00px;font-size:9.6px;font-weight:normal;font-family:'Liberation Sans';font-style:normal;color:#f0f0f0;transform:scaleX(0.8960);transform-origin:0 0;-webkit-text-stroke:0.25px currentColor;">Styles</div>
<div class="t" style="left:397.80px;top:100.00px;font-size:9.8px;font-weight:normal;font-family:'Liberation Sans';font-style:normal;color:#ececec;transform:scaleX(0.9548);transform-origin:0 0;-webkit-text-stroke:0.25px currentColor;">Cells</div>
<div class="t" style="left:438.52px;top:100.00px;font-size:9.8px;font-weight:normal;font-family:'Liberation Sans';font-style:normal;color:#ececec;transform:scaleX(1.0786);transform-origin:0 0;-webkit-text-stroke:0.25px currentColor;">Editing</div>
<div class="t" style="left:487.30px;top:102.00px;font-size:9.8px;font-weight:normal;font-family:'Liberation Sans';font-style:normal;color:#6a6a6a;transform:scaleX(1.0727);transform-origin:0 0;-webkit-text-stroke:0.25px currentColor;">Add-ins</div>
<div class="t" style="left:489.20px;top:136.80px;font-size:9.6px;font-weight:normal;font-family:'Liberation Sans';font-style:normal;color:#f0f0f0;transform:scaleX(0.9500);transform-origin:0 0;-webkit-text-stroke:0.25px currentColor;">Add-ins</div>
<div class="t" style="left:559.40px;top:73.80px;font-size:9.8px;font-weight:normal;font-family:'Liberation Sans';font-style:normal;color:#6a6a6a;-webkit-text-stroke:0.25px currentColor;">Analyze Data</div>
<div class="t" style="left:646.70px;top:100.20px;font-size:9.8px;font-weight:normal;font-family:'Liberation Sans';font-style:normal;color:#ececec;-webkit-text-stroke:0.25px currentColor;">Ado</div>
<div class="t" style="left:639.30px;top:113.50px;font-size:9.8px;font-weight:normal;font-family:'Liberation Sans';font-style:normal;color:#ececec;-webkit-text-stroke:0.25px currentColor;">Acrob</div>
<div class="t" style="left:10.85px;top:163.30px;font-size:13px;font-weight:normal;font-family:'Liberation Sans';font-style:normal;color:#f2f2f2;transform:scaleX(1.1467);transform-origin:0 0;-webkit-text-stroke:0.3px currentColor;">D2</div>
<div class="t" style="left:157.50px;top:161.00px;font-size:15px;font-weight:normal;font-family:'Liberation Serif';font-style:italic;color:#e8e8e8;transform:scaleX(1.0636);transform-origin:0 0;">fx</div>
<div class="t" style="left:32.00px;top:232.40px;font-size:14px;font-weight:normal;font-family:'Liberation Sans';font-style:normal;color:#2a1206;transform:scaleX(0.8056);transform-origin:0 0;-webkit-text-stroke:0.35px #2a1206;">TEXT</div>
<div class="t" style="left:159.47px;top:232.40px;font-size:14px;font-weight:normal;font-family:'Liberation Sans';font-style:normal;color:#2a1206;transform:scaleX(1.0302);transform-origin:0 0;-webkit-text-stroke:0.35px #2a1206;">Start_num</div>
<div class="t" style="left:232.26px;top:232.40px;font-size:14px;font-weight:normal;font-family:'Liberation Sans';font-style:normal;color:#2a1206;transform:scaleX(1.0386);transform-origin:0 0;-webkit-text-stroke:0.35px #2a1206;">Num_chars</div>
<div class="t" style="left:327.29px;top:232.40px;font-size:14px;font-weight:normal;font-family:'Liberation Sans';font-style:normal;color:#2a1206;transform:scaleX(1.0103);transform-origin:0 0;-webkit-text-stroke:0.35px #2a1206;">Result</div>
<div class="t" style="left:32.20px;top:253.53px;font-size:14px;font-weight:normal;font-family:'Liberation Sans';font-style:normal;color:#0b1a0d;transform:scaleX(0.9328);transform-origin:0 0;-webkit-text-stroke:0.35px #0b1a0d;">ABCDEFG</div>
<div class="t" style="left:32.20px;top:274.66px;font-size:14px;font-weight:normal;font-family:'Liberation Sans';font-style:normal;color:#0b1a0d;transform:scaleX(0.9328);transform-origin:0 0;-webkit-text-stroke:0.35px #0b1a0d;">ABCDEFG</div>
<div class="t" style="left:32.20px;top:295.79px;font-size:14px;font-weight:normal;font-family:'Liberation Sans';font-style:normal;color:#0b1a0d;transform:scaleX(0.9328);transform-origin:0 0;-webkit-text-stroke:0.35px #0b1a0d;">ABCDEFG</div>
<div class="t" style="left:32.20px;top:316.92px;font-size:14px;font-weight:normal;font-family:'Liberation Sans';font-style:normal;color:#0b1a0d;transform:scaleX(0.9753);transform-origin:0 0;-webkit-text-stroke:0.35px #0b1a0d;">ABC-100-DEF</div>
<div class="t" style="left:32.20px;top:338.05px;font-size:14px;font-weight:normal;font-family:'Liberation Sans';font-style:normal;color:#0b1a0d;transform:scaleX(0.9753);transform-origin:0 0;-webkit-text-stroke:0.35px #0b1a0d;">ABC-200-DEF</div>
<div class="t" style="left:32.20px;top:359.18px;font-size:14px;font-weight:normal;font-family:'Liberation Sans';font-style:normal;color:#0b1a0d;transform:scaleX(0.9753);transform-origin:0 0;-webkit-text-stroke:0.35px #0b1a0d;">ABC-300-DEF</div>
<div class="t" style="left:31.23px;top:380.31px;font-size:14px;font-weight:normal;font-family:'Liberation Sans';font-style:normal;color:#0b1a0d;transform:scaleX(0.9727);transform-origin:0 0;-webkit-text-stroke:0.35px #0b1a0d;">Size:Large</div>
<div class="t" style="left:31.19px;top:401.44px;font-size:14px;font-weight:normal;font-family:'Liberation Sans';font-style:normal;color:#0b1a0d;transform:scaleX(1.0101);transform-origin:0 0;-webkit-text-stroke:0.35px #0b1a0d;">Size:Medium</div>
<div class="t" style="left:31.17px;top:422.57px;font-size:14px;font-weight:normal;font-family:'Liberation Sans';font-style:normal;color:#0b1a0d;transform:scaleX(1.0344);transform-origin:0 0;-webkit-text-stroke:0.35px #0b1a0d;">Size:Small</div>
<div class="t" style="left:101.20px;top:450.10px;font-size:11.5px;font-weight:normal;font-family:'Liberation Sans';font-style:normal;color:#222222;-webkit-text-stroke:0.55px #222222;">Sheet1</div>
<div class="t" style="left:9.60px;top:476.80px;font-size:8.8px;font-weight:normal;font-family:'Liberation Sans';font-style:normal;color:#e0e0e0;-webkit-text-stroke:0.25px currentColor;">Enter</div>
<div class="t" style="left:88.50px;top:477.10px;font-size:9px;font-weight:normal;font-family:'Liberation Sans';font-style:normal;color:#e0e0e0;transform:scaleX(0.9796);transform-origin:0 0;-webkit-text-stroke:0.25px currentColor;">Accessibility: Good to go</div>
<div class="t" style="left:681.48px;top:475.90px;font-size:9px;font-weight:normal;font-family:'Liberation Sans';font-style:normal;color:#6f6f6f;transform:scaleX(1.0227);transform-origin:0 0;-webkit-text-stroke:0.25px currentColor;">100%</div>
<div class="a" style="left:665.2px;top:64px;width:20.3px;height:84.6px;border:1px solid #5a5a5a;background:#272727;z-index:5"></div>
<svg style="left:674.3px;top:104.8px;z-index:6" width="2.8" height="3.6" viewBox="0 0 2.8 3.6" fill="none" stroke="#e0e0e0" stroke-width="0.9"><path d="M0.3 0.3 L2.5 1.8 L0.3 3.3"/></svg>
</body></html>
